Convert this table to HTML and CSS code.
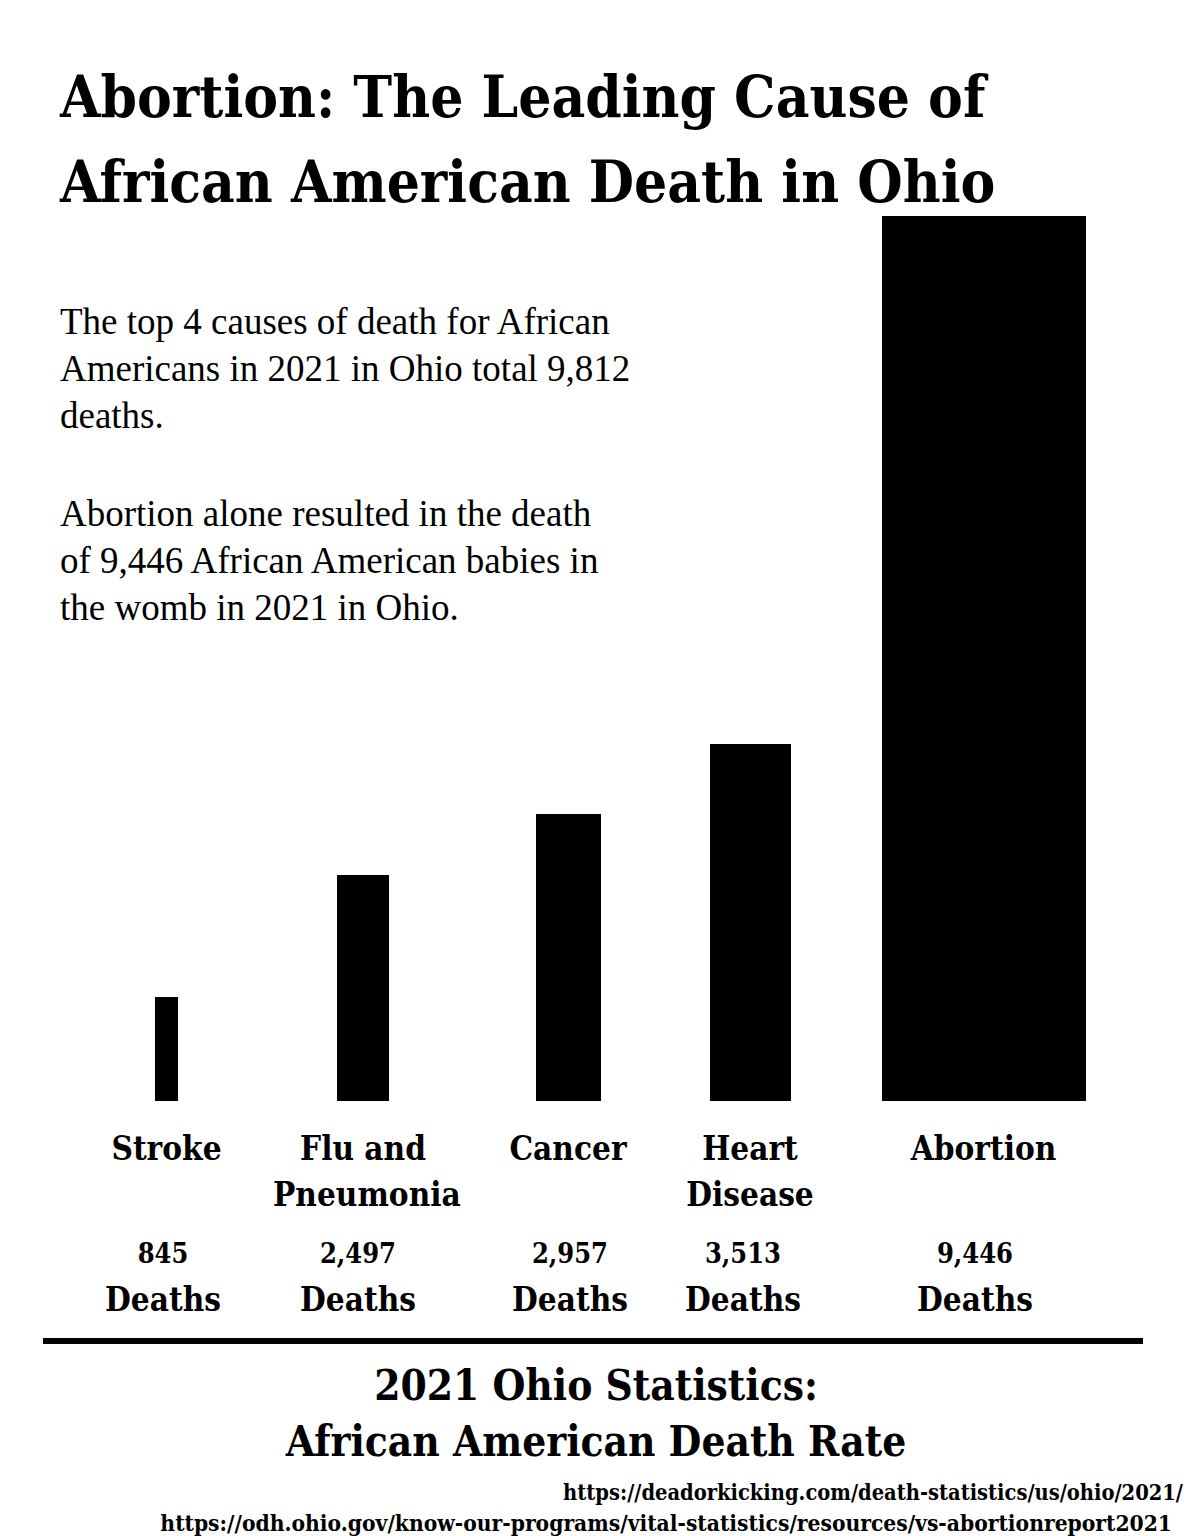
FILE: index.html
```html
<!DOCTYPE html>
<html lang="en">
<head>
<meta charset="utf-8">
<title>Abortion: The Leading Cause of African American Death in Ohio</title>
<link rel="stylesheet" href="styles.css">
</head>
<body>
<div class="poster">
  <h1 class="title">Abortion: The Leading Cause of<br>African American Death in Ohio</h1>

  <div class="plot">
    <div class="intro">
      <p>The top 4 causes of death for African<br>Americans in 2021 in Ohio total 9,812<br>deaths.</p>
      <p>Abortion alone resulted in the death<br>of 9,446 African American babies in<br>the womb in 2021 in Ohio.</p>
    </div>
    <div class="bar bar--stroke" style="height:104px"></div>
    <div class="bar bar--flu" style="height:226px"></div>
    <div class="bar bar--cancer" style="height:287px"></div>
    <div class="bar bar--heart" style="height:357px"></div>
    <div class="bar bar--abortion" style="height:885px"></div>
  </div>

  <div class="labels">
    <div class="label">Stroke</div>
    <div class="label">Flu and<br>Pneumonia</div>
    <div class="label">Cancer</div>
    <div class="label">Heart<br>Disease</div>
    <div class="label">Abortion</div>
  </div>

  <div class="counts">
    <div class="count"><span class="count__num">845</span><span class="count__unit">Deaths</span></div>
    <div class="count"><span class="count__num">2,497</span><span class="count__unit">Deaths</span></div>
    <div class="count"><span class="count__num">2,957</span><span class="count__unit">Deaths</span></div>
    <div class="count"><span class="count__num">3,513</span><span class="count__unit">Deaths</span></div>
    <div class="count"><span class="count__num">9,446</span><span class="count__unit">Deaths</span></div>
  </div>

  <div class="rule"></div>

  <div class="footer">
    <h2 class="footer__title">2021 Ohio Statistics:<br>African American Death Rate</h2>
    <p class="source source--one">https://deadorkicking.com/death-statistics/us/ohio/2021/</p>
    <p class="source source--two">https://odh.ohio.gov/know-our-programs/vital-statistics/resources/vs-abortionreport2021</p>
  </div>
</div>
</body>
</html>
```

FILE: styles.css
```css
html, body {
  margin: 0;
  padding: 0;
  background: #fff;
}

.poster {
  width: 1187px;
  height: 1536px;
  overflow: hidden;
  color: #000;
  font-family: "DejaVu Serif", serif;
  font-stretch: condensed;
}

.title {
  margin: 55px 0 -9px 60px;
  font-weight: 700;
  font-size: 58px;
  line-height: 85px;
}

.plot {
  display: grid;
  grid-template-columns: 213px 180px 230px 134px 333px;
  grid-template-rows: auto 1fr;
  height: 885px;
  padding-left: 60px;
}

.intro {
  grid-column: 1 / 5;
  grid-row: 1;
  margin-top: 82px;
  font-family: "Liberation Serif", serif;
  font-stretch: normal;
  font-size: 37px;
  line-height: 47px;
}

.intro p {
  margin: 0 0 51px;
}

.intro p:last-child {
  margin-bottom: 0;
}

.bar {
  grid-row: 2;
  align-self: end;
  justify-self: center;
  background: #000;
}

.bar--stroke { width: 23px; }
.bar--flu { width: 52px; }
.bar--cancer { width: 65px; }
.bar--heart { width: 81px; }
.bar--abortion { width: 204px; grid-column: 5; grid-row: 1 / 3; }

.labels {
  display: grid;
  grid-template-columns: 213px 180px 230px 134px 333px;
  padding-left: 60px;
  margin-top: 25px;
}

.label {
  text-align: center;
  white-space: nowrap;
  font-weight: 700;
  font-size: 33px;
  line-height: 46px;
}

.counts {
  display: grid;
  grid-template-columns: 194px 196px 228px 118px 346px;
  padding-left: 66px;
  margin-top: 12px;
}

.count {
  display: flex;
  flex-direction: column;
  align-items: center;
  font-weight: 700;
  white-space: nowrap;
}

.count__num {
  font-size: 27px;
  line-height: 47px;
}

.count__unit {
  font-size: 33px;
  line-height: 46px;
}

.rule {
  margin: 15px 0 0 43px;
  width: 1100px;
  height: 6px;
  background: #000;
}

.footer__title {
  margin: 14px 0 0;
  padding-left: 5px;
  text-align: center;
  font-weight: 700;
  font-size: 42px;
  line-height: 56px;
}

.source {
  margin: 0;
  text-align: right;
  font-weight: 700;
  line-height: 30px;
  white-space: nowrap;
}

.source--one { margin-top: 8px; padding-right: 4px; font-size: 21.7px; }
.source--two { padding-right: 15px; font-size: 22.6px; }
```
